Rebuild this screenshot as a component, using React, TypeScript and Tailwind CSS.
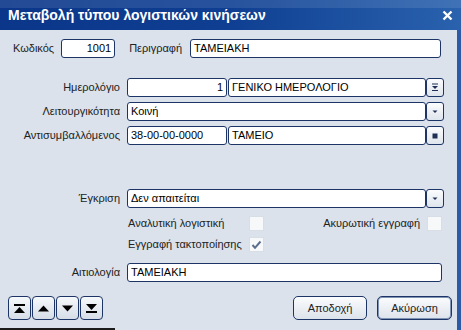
import React from "react";

const FONT = { fontFamily: '"Liberation Sans", Arial, sans-serif' };

function Field({ w, value, right, className = "" }: { w: string; value?: string; right?: boolean; className?: string }) {
  return (
    <div
      className={`h-full ${w} rounded-[3px] border border-[#1d3566] bg-white px-[3px] text-[11px] leading-[17px] text-black ${right ? "text-right" : ""} ${className}`}
    >
      {value}
    </div>
  );
}

function PickBtn({ kind }: { kind: "double" | "down" | "square" }) {
  return (
    <div className="flex h-full w-[18px] items-center justify-center rounded-[3px] border border-[#1d3566] bg-gradient-to-b from-[#fbfcfd] to-[#dfe5ed]">
      <svg width="8" height="9" viewBox="0 0 8 9">
        {kind === "double" && (
          <g fill="#1d2f55">
            <rect x="1" y="0.5" width="6" height="1" />
            <path d="M1 3 L7 3 L4 6 Z" />
            <rect x="1" y="7" width="6" height="1" />
          </g>
        )}
        {kind === "down" && <path d="M1.5 3.5 L6.5 3.5 L4 6 Z" fill="#1d2f55" />}
        {kind === "square" && <rect x="1.5" y="2.5" width="5" height="5" fill="#1d2f55" />}
      </svg>
    </div>
  );
}

function Row({ label, children, className = "" }: { label: string; children: React.ReactNode; className?: string }) {
  return (
    <div className={`flex h-[19px] items-center ${className}`}>
      <div className="w-[122px] pr-[2px] text-right text-[11px] text-[#222]">{label}</div>
      <div className="ml-[5px] flex h-full">{children}</div>
    </div>
  );
}

function Check({ checked }: { checked?: boolean }) {
  return (
    <div className="flex h-[15px] w-[15px] items-center justify-center border border-[#d8dee6] bg-[#f6f8fa]">
      {checked && (
        <svg width="11" height="10" viewBox="0 0 11 10">
          <path d="M1.5 5 L4 7.8 L9.5 1.5" stroke="#5a6d8c" strokeWidth="2" fill="none" />
        </svg>
      )}
    </div>
  );
}

function NavBtn({ kind }: { kind: "first" | "up" | "down" | "last" }) {
  return (
    <div className="flex h-[24px] w-[23px] items-center justify-center rounded-[4px] border border-[#1d3566] bg-gradient-to-b from-[#f7f9fb] to-[#d6dde7]">
      <svg width="13" height="11" viewBox="0 0 13 11">
        {kind === "first" && (
          <g fill="#000">
            <rect x="1" y="1" width="11" height="2" />
            <path d="M1 10 L12 10 L6.5 4 Z" />
          </g>
        )}
        {kind === "up" && <path d="M1 8.5 L12 8.5 L6.5 2.5 Z" fill="#000" />}
        {kind === "down" && <path d="M1 2.5 L12 2.5 L6.5 8.5 Z" fill="#000" />}
        {kind === "last" && (
          <g fill="#000">
            <path d="M1 1 L12 1 L6.5 7 Z" />
            <rect x="1" y="8" width="11" height="2" />
          </g>
        )}
      </svg>
    </div>
  );
}

export default function App() {
  return (
    <div className="flex h-[330px] w-[461px] flex-col overflow-hidden bg-[#dbe2eb]" style={FONT}>
      <div className="flex h-[30px] shrink-0 items-center justify-between bg-gradient-to-r from-[#0b368a] via-[#0f3f92] to-[#2a62ae] pl-[8px] pr-[8px] shadow-[inset_0_8px_0_rgba(255,255,255,0.1)]">
        <span className="text-[14px] font-bold text-white">Μεταβολή τύπου λογιστικών κινήσεων</span>
        <svg width="11" height="11" viewBox="0 0 11 11">
          <path d="M1.5 1.5 L9.5 9.5 M9.5 1.5 L1.5 9.5" stroke="#fff" strokeWidth="2.4" />
        </svg>
      </div>

      <div className="flex flex-1 flex-col border-r-[4px] border-[#2b5aa6]">
        <div className="mt-[9px] flex h-[19px] items-center">
          <span className="ml-[13px] text-[11px] text-[#222]">Κωδικός</span>
          <div className="ml-[7px] flex h-full">
            <Field w="w-[54px]" value="1001" right />
          </div>
          <span className="ml-[14px] text-[11px] text-[#222]">Περιγραφή</span>
          <div className="ml-[8px] flex h-full">
            <Field w="w-[251px]" value="ΤΑΜΕΙΑΚΗ" />
          </div>
        </div>

        <div className="mt-[20px] flex flex-col gap-[5px]">
          <Row label="Ημερολόγιο">
            <Field w="w-[100px]" value="1" right />
            <Field w="w-[198px]" value="ΓΕΝΙΚΟ ΗΜΕΡΟΛΟΓΙΟ" className="ml-[1px]" />
            <PickBtn kind="double" />
          </Row>
          <Row label="Λειτουργικότητα">
            <Field w="w-[299px]" value="Κοινή" />
            <PickBtn kind="down" />
          </Row>
          <Row label="Αντισυμβαλλόμενος">
            <Field w="w-[100px]" value="38-00-00-0000" />
            <Field w="w-[198px]" value="ΤΑΜΕΙΟ" className="ml-[1px]" />
            <PickBtn kind="square" />
          </Row>
        </div>

        <Row label="Έγκριση" className="mt-[44px]">
          <Field w="w-[299px]" value="Δεν απαιτείται" />
          <PickBtn kind="down" />
        </Row>

        <div className="mt-[8px] flex h-[15px] items-center text-[11px] text-[#222]">
          <span className="ml-[128px] w-[121px]">Αναλυτική λογιστική</span>
          <Check />
          <span className="ml-auto mr-[7px]">Ακυρωτική εγγραφή</span>
          <div className="mr-[15px]">
            <Check />
          </div>
        </div>

        <div className="mt-[6px] flex h-[15px] items-center text-[11px] text-[#222]">
          <span className="ml-[128px] w-[121px]">Εγγραφή τακτοποίησης</span>
          <Check checked />
        </div>

        <Row label="Αιτιολογία" className="mt-[11px]">
          <Field w="w-[315px]" value="ΤΑΜΕΙΑΚΗ" />
        </Row>

        <div className="mt-[14px] flex items-center">
          <div className="ml-[8px] flex gap-[1px]">
            <NavBtn kind="first" />
            <NavBtn kind="up" />
            <NavBtn kind="down" />
            <NavBtn kind="last" />
          </div>
          <div className="ml-auto mr-[5px] flex gap-[10px]">
            <div className="flex h-[24px] w-[74px] items-center justify-center rounded-[5px] border border-[#1d3566] bg-gradient-to-b from-[#fbfcfd] to-[#dde3eb] text-[11px] text-[#222]">
              Αποδοχή
            </div>
            <div className="flex h-[24px] w-[75px] items-center justify-center rounded-[5px] border border-[#1d3566] bg-gradient-to-b from-[#fbfcfd] to-[#dde3eb] text-[11px] text-[#222] shadow-[inset_0_0_0_1px_#7f93b5]">
              Ακύρωση
            </div>
          </div>
        </div>
        <div className="mt-auto h-[2px] w-[115px] bg-[#1b1b1b]" />
      </div>
    </div>
  );
}
